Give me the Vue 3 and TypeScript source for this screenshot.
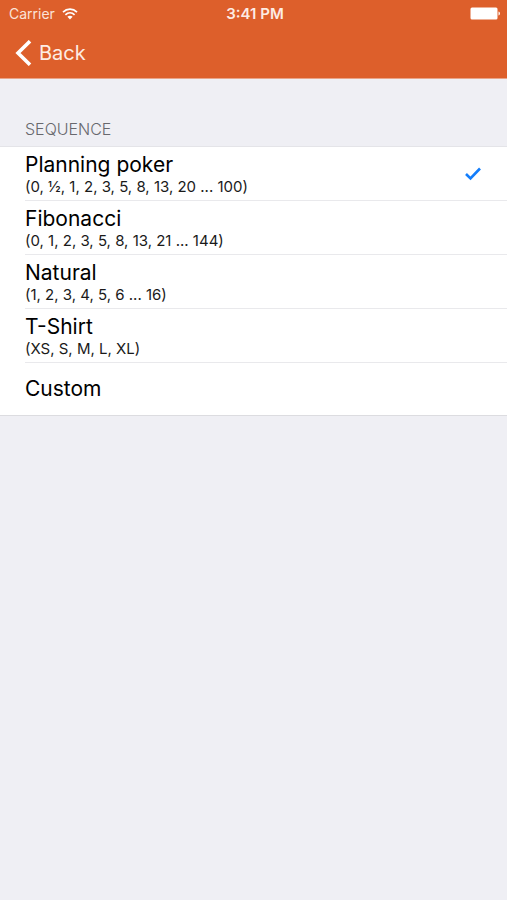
<script setup lang="ts">
import { ref } from 'vue'

interface SequenceOption {
  id: string
  title: string
  values?: string
}

const options: SequenceOption[] = [
  { id: 'poker', title: 'Planning poker', values: '(0, ½, 1, 2, 3, 5, 8, 13, 20 ... 100)' },
  { id: 'fibonacci', title: 'Fibonacci', values: '(0, 1, 2, 3, 5, 8, 13, 21 ... 144)' },
  { id: 'natural', title: 'Natural', values: '(1, 2, 3, 4, 5, 6 ... 16)' },
  { id: 'tshirt', title: 'T-Shirt', values: '(XS, S, M, L, XL)' },
  { id: 'custom', title: 'Custom' },
]

const selected = ref<string>('poker')
</script>

<template>
  <div class="screen">
    <header class="top">
      <div class="status">
        <span class="carrier">
          Carrier
          <svg class="wifi" width="16" height="12" viewBox="0 0 16 12" aria-hidden="true">
            <path d="M1 4.1C5 0.2 11 0.2 15 4.1" />
            <path d="M3.4 6.8C6.1 4.2 9.9 4.2 12.6 6.8" />
            <path class="dot" d="M8 11.4L5.4 8.7C6.8 7.4 9.2 7.4 10.6 8.7Z" />
          </svg>
        </span>
        <span class="time">3:41 PM</span>
        <svg class="battery" width="31" height="13" viewBox="0 0 31 13" aria-hidden="true">
          <rect x="0.5" y="0.5" width="27" height="12" rx="1.5" />
          <path d="M28.5 4.5C30.4 5 30.4 8 28.5 8.5Z" />
        </svg>
      </div>
      <nav class="bar">
        <button type="button" class="back">
          <svg width="17" height="26" viewBox="0 0 17 26" aria-hidden="true">
            <path d="M15 1.2L3 13L15 24.8" />
          </svg>
          Back
        </button>
      </nav>
    </header>

    <main>
      <h2 id="sequence-heading" class="heading">SEQUENCE</h2>
      <div class="list" role="radiogroup" aria-labelledby="sequence-heading">
        <label v-for="option in options" :key="option.id" class="row">
          <input v-model="selected" class="radio" type="radio" name="sequence" :value="option.id" />
          <span class="content">
            <span class="text">
              <span class="title">{{ option.title }}</span>
              <span v-if="option.values" class="values">{{ option.values }}</span>
            </span>
            <svg
              v-if="selected === option.id"
              class="check"
              width="18"
              height="14"
              viewBox="0 0 18 14"
              aria-hidden="true"
            >
              <path d="M2 7L6.5 11.5L16 1.5" />
            </svg>
          </span>
        </label>
      </div>
    </main>
  </div>
</template>

<style>
body {
  background: #efeff4;
}
</style>

<style scoped>
.screen {
  font-family: Inter, Roboto, "Liberation Sans", sans-serif;
  color: #000;
}

.top {
  background: #dd5f2b;
  color: #fff;
  border-bottom: 1px solid #e9a489;
}

.status {
  display: grid;
  grid-template-columns: 1fr auto 1fr;
  align-items: center;
  height: 27px;
  padding: 0 6px 0 9px;
  font-size: 14px;
  line-height: 20px;
}

.carrier {
  display: flex;
  align-items: center;
  gap: 7px;
  color: #fbe3d8;
}

.wifi path {
  fill: none;
  stroke: #fff;
  stroke-width: 1.7;
}

.wifi .dot {
  fill: #fff;
  stroke: none;
}

.time {
  font-size: 15px;
  font-weight: 600;
  color: #fdece4;
}

.battery {
  justify-self: end;
  fill: #fff;
}

.bar {
  display: flex;
  align-items: center;
  height: 51px;
  padding: 0 15px;
}

.back {
  display: flex;
  align-items: center;
  gap: 7px;
  padding: 0;
  border: 0;
  background: none;
  color: #fdece4;
  font: inherit;
  font-size: 20px;
  line-height: 26px;
  cursor: pointer;
}

.back path {
  fill: none;
  stroke: #fff;
  stroke-width: 3.6;
}

.heading {
  margin: 0;
  padding: 40px 25px 7px;
  font-size: 16px;
  font-weight: 300;
  line-height: 20px;
  color: #68686d;
}

.list {
  background: #fff;
  border-top: 1px solid #e4e4e8;
  border-bottom: 1px solid #dcdce0;
}

.row {
  display: flex;
  padding-left: 25px;
  cursor: pointer;
}

.radio {
  appearance: none;
  width: 0;
  height: 0;
  margin: 0;
}

.content {
  flex: 1;
  display: flex;
  align-items: center;
  justify-content: space-between;
  height: 53px;
  padding-right: 25px;
  border-bottom: 1px solid #e9e9ec;
}

.row:last-child .content {
  height: 52px;
  border-bottom: 0;
}

.row:focus-within .radio:focus-visible + .content {
  background: #f4f4f7;
}

.text {
  display: flex;
  flex-direction: column;
}

.title {
  font-size: 21px;
  line-height: 26px;
}

.values {
  font-size: 15px;
  line-height: 18px;
  color: #1a1a1a;
}

.check path {
  fill: none;
  stroke: #147efb;
  stroke-width: 2.6;
}
</style>
